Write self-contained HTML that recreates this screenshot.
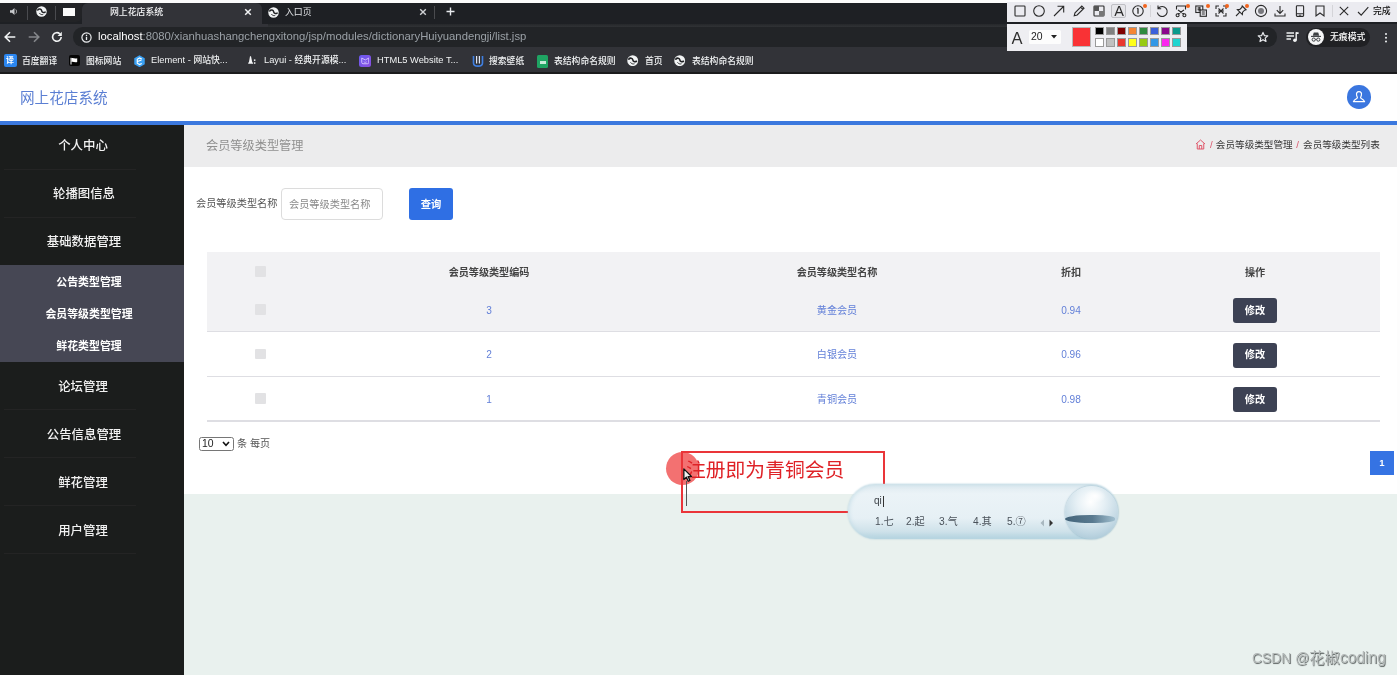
<!DOCTYPE html>
<html lang="zh-CN">
<head>
<meta charset="utf-8">
<title>网上花店系统</title>
<style>
*{box-sizing:border-box;margin:0;padding:0}
html,body{width:1400px;height:675px;overflow:hidden;background:#fff}
body{position:relative;font-family:"Liberation Sans","Noto Sans CJK SC",sans-serif;font-size:12px;color:#333}
.abs{position:absolute}
.t,.tc{will-change:transform}
.t{position:absolute;white-space:nowrap;line-height:1;transform:translateY(-50%)}
.tc{position:absolute;white-space:nowrap;line-height:1;transform:translate(-50%,-50%)}
/* chrome */
#chrome{left:0;top:0;width:1397px;height:73.6px;background:#323338}
#tabbar{left:0;top:3px;width:1397px;height:21px;background:#1e2024}
#topwhite{left:0;top:0;width:1006.5px;height:3px;background:#fbfbfb}
#rightwhite{left:1397px;top:0;width:3px;height:675px;background:#fdfdfd}
#pinned{left:0;top:3px;width:82px;height:19px;background:#222326;border-radius:0 0 6px 0}
#acttab{left:82px;top:3px;width:180px;height:22px;background:#323338;border-radius:6px 6px 0 0}
#urlpill{left:73px;top:27px;width:1203.5px;height:19.6px;border-radius:9.8px;background:#222427}
.bm{color:#f1f3f4;font-size:8.8px;font-weight:500}.bm b{font-weight:normal;font-size:9.3px}
/* app */
#hdr{left:0;top:73.6px;width:1397px;height:47.4px;background:#fff}
#blue{left:0;top:120.8px;width:1397px;height:4.6px;background:#3b78de}
#side{left:0;top:125px;width:184px;height:550px;background:#1b1d1c}
#sub{left:0;top:265px;width:184px;height:97px;background:#464754}
.mi{color:#f2f2f2;font-size:12.4px;font-weight:500}
.si{color:#fff;font-size:10.9px;font-weight:bold}
#main{left:184px;top:125px;width:1213px;height:550px;background:#e9f1ee}
#tbar{left:184px;top:125px;width:1213px;height:42.4px;background:#ececed}
#panel{left:184px;top:167px;width:1213px;height:327.2px;background:#fff}

.sep{left:4px;width:132px;height:1px;background:#242424}
.ln{left:207px;width:1173px;height:1.5px;background:#dedee3}
.cb{width:10.5px;height:10.5px;background:#e2e2e4;border-radius:1px}
.th{font-size:10.1px;font-weight:bold;color:#444}
.td{font-size:10.1px;color:#6380d8}
.btn{left:1233px;width:44px;height:25px;background:#3d4254;border-radius:3px}
.bt{left:1255px;font-size:10.2px;font-weight:bold;color:#fff}

#ime{left:848px;top:484px;width:270px;height:54.5px;border-radius:27px;background:linear-gradient(180deg,#dde9ef 0%,#ebf3f7 18%,#e6f0f5 62%,#cfe2ea 86%,#b2d2df 100%);box-shadow:0 0 2px #a9cad8,inset 0 0 5px #bcd8e3}
#ball{left:1064.5px;top:485.5px;width:53px;height:53px;border-radius:50%;background:radial-gradient(circle at 48% 30%,#ffffff 0%,#e6f0f5 30%,#bfd6e2 68%,#98bccd 100%);box-shadow:0 0 2px #86acbf}
.ime{top:522.3px;font-size:10.2px;color:#4a525a}
</style>
</head>
<body>
<!-- browser chrome -->
<div class="abs" id="chrome"></div>
<div class="abs" id="tabbar"></div>
<div class="abs" id="pinned"></div>
<div class="abs" id="acttab"></div>
<div class="abs" id="urlpill"></div>


<!-- tab strip -->
<div class="abs" style="left:27px;top:6px;width:1px;height:14px;background:#4a4b4f"></div>
<div class="abs" style="left:55px;top:6px;width:1px;height:14px;background:#4a4b4f"></div>
<svg class="abs" style="left:9px;top:7px" width="9" height="9" viewBox="0 0 18 18"><path d="M2 6.5 H6 L11 2 V16 L6 11.5 H2 Z" fill="#c8cacd"/><path d="M13.5 5 C15.5 7 15.5 11 13.5 13" fill="none" stroke="#c8cacd" stroke-width="1.8"/></svg>
<svg class="abs" style="left:35.5px;top:6.0px" width="11.0" height="11.0" viewBox="0 0 20 20"><circle cx="10" cy="10" r="9.5" fill="#f1f3f4"/><path d="M3.2 7.2 C5.5 4.6 9.6 5.2 10.2 8.6 C10.7 11.6 13.6 12.8 16.6 11" fill="none" stroke="#202124" stroke-width="2.8" stroke-linecap="round"/><path d="M6.5 13.5 C8 15.5 10.5 16.3 12.5 15.6" fill="none" stroke="#202124" stroke-width="1.6" stroke-linecap="round"/></svg>
<div class="abs" style="left:63px;top:7.5px;width:12px;height:8.5px;background:#fafafa"></div>
<div class="t" style="left:109.5px;top:12px;font-size:8.9px;color:#f4f5f6;font-weight:500">网上花店系统</div>
<svg class="abs" style="left:243.5px;top:8px" width="8" height="8" viewBox="0 0 8 8"><path d="M1.2 1.2 L6.8 6.8 M6.8 1.2 L1.2 6.8" stroke="#f1f3f4" stroke-width="1.5"/></svg>
<svg class="abs" style="left:267.5px;top:6.5px" width="11.0" height="11.0" viewBox="0 0 20 20"><circle cx="10" cy="10" r="9.5" fill="#f1f3f4"/><path d="M3.2 7.2 C5.5 4.6 9.6 5.2 10.2 8.6 C10.7 11.6 13.6 12.8 16.6 11" fill="none" stroke="#202124" stroke-width="2.8" stroke-linecap="round"/><path d="M6.5 13.5 C8 15.5 10.5 16.3 12.5 15.6" fill="none" stroke="#202124" stroke-width="1.6" stroke-linecap="round"/></svg>
<div class="t" style="left:284.5px;top:12px;font-size:8.9px;color:#e2e4e7">入口页</div>
<svg class="abs" style="left:418.5px;top:8px" width="8" height="8" viewBox="0 0 8 8"><path d="M1.2 1.2 L6.8 6.8 M6.8 1.2 L1.2 6.8" stroke="#d0d2d5" stroke-width="1.4"/></svg>
<div class="abs" style="left:434px;top:6px;width:1px;height:13px;background:#4a4b4f"></div>
<svg class="abs" style="left:445.5px;top:7px" width="9" height="9" viewBox="0 0 9 9"><path d="M4.5 0.5 V8.5 M0.5 4.5 H8.5" stroke="#e8eaed" stroke-width="1.4"/></svg>

<!-- nav -->
<svg class="abs" style="left:3.5px;top:31px" width="12" height="12" viewBox="0 0 12 12"><path d="M11.3 6 H1.5 M6 1.2 L1.2 6 L6 10.8" fill="none" stroke="#f1f3f4" stroke-width="1.6"/></svg>
<svg class="abs" style="left:27.5px;top:31px" width="12" height="12" viewBox="0 0 12 12"><path d="M0.7 6 H10.5 M6 1.2 L10.8 6 L6 10.8" fill="none" stroke="#85878b" stroke-width="1.6"/></svg>
<svg class="abs" style="left:50.5px;top:31px" width="12" height="12" viewBox="0 0 12 12"><path d="M10.2 6 A4.3 4.3 0 1 1 8.8 2.8" fill="none" stroke="#f1f3f4" stroke-width="1.6"/><path d="M10.8 0.8 V5 H6.6 Z" fill="#f1f3f4"/></svg>
<svg class="abs" style="left:80.5px;top:31.5px" width="11" height="11" viewBox="0 0 11 11"><circle cx="5.5" cy="5.5" r="4.6" fill="none" stroke="#eceef0" stroke-width="1.2"/><path d="M5.5 4.8 V8 M5.5 2.8 V4" stroke="#eceef0" stroke-width="1.3"/></svg>
<div class="t" id="url" style="left:97.5px;top:37.2px;font-size:11.3px;color:#9aa0a6"><span style="color:#fff">localhost</span>:8080/xianhuashangchengxitong/jsp/modules/dictionaryHuiyuandengji/list.jsp</div>
<svg class="abs" style="left:1257px;top:31px" width="12" height="12" viewBox="0 0 24 24"><path d="M12 2.8 L14.7 9.2 L21.6 9.8 L16.4 14.3 L18 21 L12 17.4 L6 21 L7.6 14.3 L2.4 9.8 L9.3 9.2 Z" fill="none" stroke="#e8eaed" stroke-width="2.4" stroke-linejoin="round"/></svg>
<svg class="abs" style="left:1285.5px;top:31px" width="13" height="12" viewBox="0 0 13 12"><path d="M0.5 2 H8 M0.5 5 H8 M0.5 8 H5" stroke="#f1f3f4" stroke-width="1.5"/><path d="M10.2 1.2 V9" stroke="#f1f3f4" stroke-width="1.4"/><path d="M10 1.2 H12.6 V3 H10 Z" fill="#f1f3f4"/><circle cx="8.9" cy="9.2" r="1.8" fill="#f1f3f4"/></svg>
<div class="abs" style="left:1306px;top:27.5px;width:64px;height:19px;border-radius:9.5px;background:#202124"></div>
<svg class="abs" style="left:1307.7px;top:29.2px" width="16" height="16" viewBox="0 0 16 16"><circle cx="8" cy="8" r="8" fill="#f5f6f7"/><path d="M4.8 6.8 L5.8 3.6 H10.2 L11.2 6.8 Z" fill="#3c4043"/><path d="M3 7.4 H13" stroke="#3c4043" stroke-width="1.1"/><circle cx="5.7" cy="10.6" r="1.6" fill="none" stroke="#3c4043" stroke-width="1"/><circle cx="10.3" cy="10.6" r="1.6" fill="none" stroke="#3c4043" stroke-width="1"/><path d="M7.3 10.4 H8.7" stroke="#3c4043" stroke-width="0.9"/></svg>
<div class="t" style="left:1329.5px;top:37px;font-size:8.9px;color:#fff;font-weight:500">无痕模式</div>
<div class="abs" style="left:1385px;top:32.6px;width:2.2px;height:2.2px;border-radius:50%;background:#f1f3f4;box-shadow:0 3.8px 0 #f1f3f4,0 7.6px 0 #f1f3f4"></div>


<!-- bookmarks -->
<div class="abs" style="left:3.5px;top:54px;width:13.5px;height:13px;border-radius:2px;background:#2b86f0"></div>
<div class="tc" style="left:10.3px;top:60.5px;font-size:8px;color:#fff;font-weight:bold">译</div>
<div class="t bm" style="left:21.5px;top:61px">百度翻译</div>
<div class="abs" style="left:68.5px;top:55px;width:11px;height:11px;border-radius:2px;background:#050505"></div>
<svg class="abs" style="left:70px;top:56.5px" width="8" height="8" viewBox="0 0 8 8"><path d="M1 0.8 V7.5" stroke="#fff" stroke-width="1"/><path d="M1.4 1.2 C3 0.4 4.5 2 7.2 1.2 V5 C4.5 5.8 3 4.2 1.4 5 Z" fill="#fff"/></svg>
<div class="t bm" style="left:85.7px;top:61px">图标网站</div>
<svg class="abs" style="left:133.5px;top:54.5px" width="11" height="12.5" viewBox="0 0 22 25"><path d="M11 0.5 L21.5 6.5 V18.5 L11 24.5 L0.5 18.5 V6.5 Z" fill="#3aa0f3"/><path d="M15.5 8.2 L11 5.8 L6.5 8.4 V16.6 L11 19.2 L15.5 16.8 M7 12.8 L15 9.8" fill="none" stroke="#fff" stroke-width="2.2"/></svg>
<div class="t bm" style="left:150.5px;top:61px"><b>Element - </b>网站快<b>...</b></div>
<svg class="abs" style="left:247.8px;top:56.3px" width="8" height="8" viewBox="0 0 8 8"><path d="M2 0.2 L3 0.2 L4.3 6.6 H5 V7.8 H0.2 V6.6 H0.9 Z" fill="#f4f5f6"/><rect x="5.9" y="3.4" width="1.5" height="1.5" fill="#f4f5f6"/><rect x="5.9" y="6.3" width="1.5" height="1.5" fill="#f4f5f6"/></svg>
<div class="t bm" style="left:263.5px;top:61px"><b>Layui - </b>经典开源模<b>...</b></div>
<div class="abs" style="left:358.5px;top:54.5px;width:12.5px;height:12.5px;border-radius:2.5px;background:linear-gradient(135deg,#6a5bf0,#8a4fe0)"></div>
<svg class="abs" style="left:360.5px;top:57px" width="8.5" height="7.5" viewBox="0 0 17 15"><path d="M1.5 2 L8.5 6 L15.5 2 V11 C15.5 12.5 14.5 13.5 13 13.5 H4 C2.5 13.5 1.5 12.5 1.5 11 Z" fill="none" stroke="#d9ccff" stroke-width="1.8"/><path d="M5.5 9.5 C7 11 10 11 11.5 9.5" fill="none" stroke="#d9ccff" stroke-width="1.5"/></svg>
<div class="t bm" style="left:376.5px;top:61px"><b>HTML5 Website T...</b></div>
<svg class="abs" style="left:471.5px;top:54.5px" width="12" height="12.5" viewBox="0 0 12 12.5"><path d="M1.5 1 V8 C1.5 12.2 10.5 12.2 10.5 8 V1" fill="none" stroke="#3f7fe0" stroke-width="1.6"/><path d="M4.6 1 V8.5 M7.4 1 V8.5" stroke="#dfe6f5" stroke-width="1.2"/></svg>
<div class="t bm" style="left:488.7px;top:61px">搜索壁纸</div>
<div class="abs" style="left:537px;top:54.5px;width:11px;height:13px;border-radius:1.5px;background:#1fa463"></div>
<div class="abs" style="left:539.5px;top:60.5px;width:6px;height:3.6px;background:#d9f2e4;opacity:.9"></div>
<div class="t bm" style="left:554px;top:61px">表结构命名规则</div>
<svg class="abs" style="left:627.3px;top:55.0px" width="11.4" height="11.4" viewBox="0 0 20 20"><circle cx="10" cy="10" r="9.5" fill="#f1f3f4"/><path d="M3.2 7.2 C5.5 4.6 9.6 5.2 10.2 8.6 C10.7 11.6 13.6 12.8 16.6 11" fill="none" stroke="#202124" stroke-width="2.8" stroke-linecap="round"/><path d="M6.5 13.5 C8 15.5 10.5 16.3 12.5 15.6" fill="none" stroke="#202124" stroke-width="1.6" stroke-linecap="round"/></svg>
<div class="t bm" style="left:644.7px;top:61px">首页</div>
<svg class="abs" style="left:674.3px;top:55.0px" width="11.4" height="11.4" viewBox="0 0 20 20"><circle cx="10" cy="10" r="9.5" fill="#f1f3f4"/><path d="M3.2 7.2 C5.5 4.6 9.6 5.2 10.2 8.6 C10.7 11.6 13.6 12.8 16.6 11" fill="none" stroke="#202124" stroke-width="2.8" stroke-linecap="round"/><path d="M6.5 13.5 C8 15.5 10.5 16.3 12.5 15.6" fill="none" stroke="#202124" stroke-width="1.6" stroke-linecap="round"/></svg>
<div class="t bm" style="left:691.8px;top:61px">表结构命名规则</div>


<!-- screenshot tool -->
<div class="abs" style="left:1006.5px;top:0;width:390.3px;height:21.7px;background:#ebebf0"></div>
<div class="abs" style="left:1006.5px;top:24.3px;width:180.5px;height:26.4px;background:#eeeef2"></div>
<svg class="abs" style="left:1012.6px;top:3.8000000000000007px" width="14" height="14" viewBox="0 0 14 14" fill="none" stroke="#2a2a2a" stroke-width="1.1"><rect x="2" y="2" width="10" height="10" rx="0.8"/></svg>
<svg class="abs" style="left:1032.4px;top:3.8000000000000007px" width="14" height="14" viewBox="0 0 14 14" fill="none" stroke="#2a2a2a" stroke-width="1.1"><circle cx="7" cy="7" r="5.3"/></svg>
<svg class="abs" style="left:1052.2px;top:3.8000000000000007px" width="14" height="14" viewBox="0 0 14 14" fill="none" stroke="#2a2a2a" stroke-width="1.1"><path d="M2 12 L11.5 2.5 M5.5 2.3 H11.7 V8.5"/></svg>
<svg class="abs" style="left:1071.7px;top:3.8000000000000007px" width="14" height="14" viewBox="0 0 14 14" fill="none" stroke="#2a2a2a" stroke-width="1.1"><path d="M2.2 11.8 L3 8.8 L9.8 2 L12 4.2 L5.2 11 Z M8.6 3.2 L10.8 5.4"/></svg>
<svg class="abs" style="left:1091.6px;top:3.8000000000000007px" width="14" height="14" viewBox="0 0 14 14" fill="none" stroke="#2a2a2a" stroke-width="1.1"><rect x="2" y="2" width="10" height="10" rx="0.8"/><path d="M2 2 H7 V7 H2 Z" fill="#555" stroke="none"/><path d="M7 7 H12 V12 H7 Z" fill="#777" stroke="none"/></svg>
<div class="abs" style="left:1111.4px;top:3.6px;width:15px;height:14.2px;border:1px solid #bfbfc4;border-radius:2px;background:#e6e6ea"></div>
<div class="tc" style="left:1119px;top:11px;font-size:14.5px;color:#2a2a2a">A</div>
<svg class="abs" style="left:1131.4px;top:3.8000000000000007px" width="14" height="14" viewBox="0 0 14 14" fill="none" stroke="#2a2a2a" stroke-width="1.1"><circle cx="7" cy="7" r="5.2"/><path d="M7 4.2 V9.8 M6 4.8 L7 4.2" stroke-width="1.3"/></svg>
<div class="abs" style="left:1142.6000000000001px;top:3.8px;width:4px;height:4px;border-radius:50%;background:#f0641e"></div>
<div class="abs" style="left:1150.3px;top:4.5px;width:1px;height:12px;background:#d4d4d8"></div>
<svg class="abs" style="left:1154.8px;top:3.8000000000000007px" width="14" height="14" viewBox="0 0 14 14" fill="none" stroke="#2a2a2a" stroke-width="1.1"><path d="M3.2 4.5 A5 5 0 1 1 2.3 8.5 M3 1.6 V4.8 H6.2"/></svg>
<svg class="abs" style="left:1174.4px;top:3.8000000000000007px" width="14" height="14" viewBox="0 0 14 14" fill="none" stroke="#2a2a2a" stroke-width="1.1"><path d="M2.5 2 H11.5 V5.5 M2.5 2 V5.5 M4 6 L10.2 10.2 M10 6 L3.8 10.2"/><circle cx="3.6" cy="11.2" r="1.5"/><circle cx="10.4" cy="11.2" r="1.5"/></svg>
<div class="abs" style="left:1185.6000000000001px;top:3.8px;width:4px;height:4px;border-radius:50%;background:#f0641e"></div>
<svg class="abs" style="left:1194.4px;top:3.8000000000000007px" width="14" height="14" viewBox="0 0 14 14" fill="none" stroke="#2a2a2a" stroke-width="1.1"><rect x="1.8" y="2" width="7" height="6.5"/><path d="M3.5 4 H7 M5.2 3 V7.5 M3.5 5.8 H7"/><rect x="6.2" y="6" width="6.2" height="6.3" fill="#ebebf0"/><path d="M7.8 8 H10.8 M7.8 10 H10.8"/></svg>
<div class="abs" style="left:1205.6000000000001px;top:3.8px;width:4px;height:4px;border-radius:50%;background:#f0641e"></div>
<svg class="abs" style="left:1213.8px;top:3.8000000000000007px" width="14" height="14" viewBox="0 0 14 14" fill="none" stroke="#2a2a2a" stroke-width="1.1"><path d="M2 5 V2 H5 M9 2 H12 V5 M12 9 V12 H9 M5 12 H2 V9 M4.5 4.5 L9.5 9.5 M9.5 4.5 L4.5 9.5 M4 7 H10"/></svg>
<div class="abs" style="left:1225.0px;top:3.8px;width:4px;height:4px;border-radius:50%;background:#f0641e"></div>
<svg class="abs" style="left:1233.8px;top:3.8000000000000007px" width="14" height="14" viewBox="0 0 14 14" fill="none" stroke="#2a2a2a" stroke-width="1.1"><path d="M8.2 2 L12 5.8 L10.6 6.2 L8.6 8.2 L8.4 10.6 L3.4 5.6 L5.8 5.4 L7.8 3.4 Z M5.8 8.2 L2 12"/></svg>
<div class="abs" style="left:1245.0px;top:3.8px;width:4px;height:4px;border-radius:50%;background:#f0641e"></div>
<svg class="abs" style="left:1253.6px;top:3.8000000000000007px" width="14" height="14" viewBox="0 0 14 14" fill="none" stroke="#2a2a2a" stroke-width="1.1"><circle cx="7" cy="7" r="5.6"/><circle cx="7" cy="7" r="3" fill="#77777c" stroke="none"/></svg>
<svg class="abs" style="left:1273.0px;top:3.8000000000000007px" width="14" height="14" viewBox="0 0 14 14" fill="none" stroke="#2a2a2a" stroke-width="1.1"><path d="M7 2 V9.2 M3.8 6.2 L7 9.4 L10.2 6.2 M2 9.5 V12 H12 V9.5"/></svg>
<svg class="abs" style="left:1293.0px;top:3.8000000000000007px" width="14" height="14" viewBox="0 0 14 14" fill="none" stroke="#2a2a2a" stroke-width="1.1"><rect x="3.4" y="1.8" width="7.2" height="10.6" rx="0.8"/><path d="M3.4 9.8 H10.6 M6.2 11.2 H7.8"/></svg>
<svg class="abs" style="left:1313.0px;top:3.8000000000000007px" width="14" height="14" viewBox="0 0 14 14" fill="none" stroke="#2a2a2a" stroke-width="1.1"><path d="M3 2 H11 V12 L7 9 L3 12 Z"/></svg>
<div class="abs" style="left:1332px;top:4.5px;width:1px;height:12px;background:#d4d4d8"></div>
<svg class="abs" style="left:1336.7px;top:3.8000000000000007px" width="14" height="14" viewBox="0 0 14 14" fill="none" stroke="#2a2a2a" stroke-width="1.1"><path d="M2.8 2.8 L11.2 11.2 M11.2 2.8 L2.8 11.2"/></svg>
<svg class="abs" style="left:1356.4px;top:3.8000000000000007px" width="14" height="14" viewBox="0 0 14 14" fill="none" stroke="#2a2a2a" stroke-width="1.1"><path d="M2 8 L5.2 11.2 L12.3 3.2"/></svg>
<div class="t" style="left:1373.4px;top:10.8px;font-size:8.8px;color:#111;font-weight:500">完成</div>
<div class="tc" style="left:1017.2px;top:37.6px;font-size:16.5px;color:#2f2f2f">A</div>
<div class="abs" style="left:1029.3px;top:30px;width:32px;height:13.6px;background:#fdfdfd;border-radius:1.5px"></div>
<div class="t" style="left:1031.4px;top:37px;font-size:10.4px;color:#222">20</div>
<svg class="abs" style="left:1051.3px;top:35px" width="6" height="4" viewBox="0 0 6 4"><path d="M0 0 H6 L3 3.6 Z" fill="#222"/></svg>
<div class="abs" style="left:1072px;top:27.4px;width:18.8px;height:19.2px;background:#f93235;border:1px solid #b8b8b8"></div>
<div class="abs" style="left:1095.0px;top:27.2px;width:8.8px;height:8.3px;background:#000000;border:.5px solid #9a9a9a"></div><div class="abs" style="left:1095.0px;top:38.4px;width:8.8px;height:8.4px;background:#ffffff;border:.5px solid #9a9a9a"></div>
<div class="abs" style="left:1106.0px;top:27.2px;width:8.8px;height:8.3px;background:#808080;border:.5px solid #9a9a9a"></div><div class="abs" style="left:1106.0px;top:38.4px;width:8.8px;height:8.4px;background:#c0c0c0;border:.5px solid #9a9a9a"></div>
<div class="abs" style="left:1117.1px;top:27.2px;width:8.8px;height:8.3px;background:#800000;border:.5px solid #9a9a9a"></div><div class="abs" style="left:1117.1px;top:38.4px;width:8.8px;height:8.4px;background:#e9382f;border:.5px solid #9a9a9a"></div>
<div class="abs" style="left:1128.1px;top:27.2px;width:8.8px;height:8.3px;background:#f58535;border:.5px solid #9a9a9a"></div><div class="abs" style="left:1128.1px;top:38.4px;width:8.8px;height:8.4px;background:#ffff1a;border:.5px solid #9a9a9a"></div>
<div class="abs" style="left:1139.1px;top:27.2px;width:8.8px;height:8.3px;background:#2f8a3f;border:.5px solid #9a9a9a"></div><div class="abs" style="left:1139.1px;top:38.4px;width:8.8px;height:8.4px;background:#97ca12;border:.5px solid #9a9a9a"></div>
<div class="abs" style="left:1150.2px;top:27.2px;width:8.8px;height:8.3px;background:#3b5fda;border:.5px solid #9a9a9a"></div><div class="abs" style="left:1150.2px;top:38.4px;width:8.8px;height:8.4px;background:#3297e6;border:.5px solid #9a9a9a"></div>
<div class="abs" style="left:1161.2px;top:27.2px;width:8.8px;height:8.3px;background:#8a068c;border:.5px solid #9a9a9a"></div><div class="abs" style="left:1161.2px;top:38.4px;width:8.8px;height:8.4px;background:#fa26ee;border:.5px solid #9a9a9a"></div>
<div class="abs" style="left:1172.2px;top:27.2px;width:8.8px;height:8.3px;background:#0b9a8d;border:.5px solid #9a9a9a"></div><div class="abs" style="left:1172.2px;top:38.4px;width:8.8px;height:8.4px;background:#1fd5d0;border:.5px solid #9a9a9a"></div>

<div class="abs" style="left:0;top:71.8px;width:1397px;height:1.8px;background:#1b1b1d"></div>
<div class="abs" style="left:268px;top:24px;width:738px;height:3px;background:linear-gradient(180deg,#26282b,#303235)"></div>
<!-- app -->
<div class="abs" id="hdr"></div>
<div class="t" style="left:19.6px;top:97.8px;font-size:14.6px;color:#5b7fd3">网上花店系统</div>
<div class="abs" id="blue"></div>
<div class="abs" id="main"></div>
<div class="abs" id="tbar"></div>
<div class="abs" id="panel"></div>
<div class="abs" id="side"></div>
<div class="abs" id="sub"></div>


<!-- sidebar items -->
<div class="tc mi" style="left:83px;top:146.1px">个人中心</div>
<div class="tc mi" style="left:83.5px;top:194.1px">轮播图信息</div>
<div class="tc mi" style="left:83.5px;top:242.1px">基础数据管理</div>
<div class="tc si" style="left:89px;top:282px">公告类型管理</div>
<div class="tc si" style="left:89px;top:314px">会员等级类型管理</div>
<div class="tc si" style="left:89px;top:346px">鲜花类型管理</div>
<div class="tc mi" style="left:83px;top:386.6px">论坛管理</div>
<div class="tc mi" style="left:83.5px;top:434.6px">公告信息管理</div>
<div class="tc mi" style="left:83px;top:482.6px">鲜花管理</div>
<div class="tc mi" style="left:83px;top:531.1px">用户管理</div>
<div class="abs sep" style="top:169px"></div>
<div class="abs sep" style="top:217px"></div>
<div class="abs sep" style="top:409px"></div>
<div class="abs sep" style="top:457px"></div>
<div class="abs sep" style="top:505px"></div>
<div class="abs sep" style="top:553px"></div>

<!-- title bar -->
<div class="t" style="left:206px;top:145.5px;font-size:12.2px;color:#8f8f8f">会员等级类型管理</div>
<svg class="abs" style="left:1195px;top:139px" width="11" height="11" viewBox="0 0 22 22"><path d="M2 10 L11 2 L20 10 M4.5 9 V20 H17.5 V9 M8.5 20 V13 H13.5 V20" fill="none" stroke="#e0566a" stroke-width="2"/></svg>
<div class="t" style="left:1210.3px;top:145.3px;font-size:9.6px;color:#333"><span style="color:#d9536a;margin-right:3.2px">/</span>会员等级类型管理<span style="color:#d9536a;margin:0 4.2px 0 3.6px">/</span>会员等级类型列表</div>

<!-- search -->
<div class="t" style="left:196px;top:204px;font-size:10.2px;color:#555">会员等级类型名称</div>
<div class="abs" style="left:281px;top:188px;width:102px;height:31.5px;border:1px solid #dcdcdc;border-radius:4px;background:#fff"></div>
<div class="t" style="left:289px;top:204.5px;font-size:10.2px;color:#8a8a8a">会员等级类型名称</div>
<div class="abs" style="left:408.5px;top:188px;width:44px;height:32px;background:#2f6fe4;border-radius:3px"></div>
<div class="tc" style="left:430.5px;top:204.5px;font-size:10.3px;color:#fff;font-weight:bold">查询</div>

<!-- table -->
<div class="abs" style="left:207px;top:252px;width:1173px;height:80px;background:#f2f2f4"></div>
<div class="abs ln" style="top:330.5px"></div>
<div class="abs ln" style="top:375.5px"></div>
<div class="abs ln" style="top:420px"></div>
<div class="abs cb" style="left:255px;top:266px"></div>
<div class="abs cb" style="left:255px;top:304px"></div>
<div class="abs cb" style="left:255px;top:348.5px"></div>
<div class="abs cb" style="left:255px;top:393px"></div>
<div class="tc th" style="left:489px;top:272.6px">会员等级类型编码</div>
<div class="tc th" style="left:837px;top:272.6px">会员等级类型名称</div>
<div class="tc th" style="left:1070.5px;top:272.6px">折扣</div>
<div class="tc th" style="left:1254.5px;top:272.6px">操作</div>

<div class="tc td" style="left:489px;top:310.8px">3</div>
<div class="tc td" style="left:837px;top:310.8px">黄金会员</div>
<div class="tc td" style="left:1070.5px;top:310.8px">0.94</div>
<div class="abs btn" style="top:298px"></div><div class="tc bt" style="top:310.5px">修改</div>

<div class="tc td" style="left:489px;top:355.3px">2</div>
<div class="tc td" style="left:837px;top:355.3px">白银会员</div>
<div class="tc td" style="left:1070.5px;top:355.3px">0.96</div>
<div class="abs btn" style="top:342.5px"></div><div class="tc bt" style="top:355px">修改</div>

<div class="tc td" style="left:489px;top:399.8px">1</div>
<div class="tc td" style="left:837px;top:399.8px">青铜会员</div>
<div class="tc td" style="left:1070.5px;top:399.8px">0.98</div>
<div class="abs btn" style="top:387px"></div><div class="tc bt" style="top:399.5px">修改</div>

<!-- pager -->
<div class="abs" style="left:198.5px;top:436.5px;width:35.8px;height:14px;border:1px solid #767676;border-radius:2.5px;background:#fff"></div>
<div class="t" style="left:201.5px;top:443.7px;font-size:10.4px;color:#222">10</div>
<svg class="abs" style="left:222px;top:441px" width="8" height="6" viewBox="0 0 8 6"><path d="M1 1 L4 4.3 L7 1" fill="none" stroke="#111" stroke-width="1.6"/></svg>
<div class="t" style="left:237px;top:443.6px;font-size:10.1px;color:#555">条 每页</div>
<div class="abs" style="left:1370px;top:451px;width:24px;height:24px;background:#3573e3"></div>
<div class="tc" style="left:1382px;top:463px;font-size:9.5px;color:#fff;font-weight:bold">1</div>


<!-- avatar -->
<div class="abs" style="left:1347px;top:85px;width:23.6px;height:23.6px;border-radius:50%;background:#3a76df"></div>
<svg class="abs" style="left:1351.8px;top:89.5px" width="14" height="14" viewBox="0 0 14 14"><path d="M7 1.6 C9 1.6 9.8 3.2 9.4 5.2 C9.1 6.6 8.6 7.2 8.6 7.8 C8.6 8.6 11.6 9 12.6 11.6 H1.4 C2.4 9 5.4 8.6 5.4 7.8 C5.4 7.2 4.9 6.6 4.6 5.2 C4.2 3.2 5 1.6 7 1.6 Z" fill="none" stroke="#fff" stroke-width="1.2" stroke-linejoin="round"/></svg>

<!-- annotation -->
<div class="abs" style="left:665.9px;top:452.2px;width:33px;height:33px;border-radius:50%;background:rgba(240,78,78,.8)"></div>
<div class="abs" style="left:681px;top:450.5px;width:204px;height:62.5px;border:2px solid #ea3539"></div>
<div class="t" style="left:686px;top:470.8px;font-size:19.8px;color:#df2227">注册即为青铜会员</div>
<div class="abs" style="left:685.6px;top:481px;width:1.2px;height:25.3px;background:#555"></div>
<svg class="abs" style="left:683px;top:468.4px" width="10.2" height="14.5" viewBox="0 0 12 17"><path d="M1 1 V13.5 L4 10.8 L6.2 15.6 L8.2 14.7 L6 10 H10 Z" fill="#f2f2f2" stroke="#111" stroke-width="1.5" stroke-linejoin="round"/></svg>

<!-- IME -->
<div class="abs" id="ime"></div>
<div class="abs" id="ball"></div>
<div class="abs" style="left:1065px;top:514.5px;width:50px;height:8px;border-radius:50% 40% 40% 50%;background:linear-gradient(90deg,#35566d,#4a6d85 55%,#9dbccc);opacity:.9"></div>
<div class="abs" style="left:1084px;top:489px;width:22px;height:14px;border-radius:50%;background:radial-gradient(ellipse,#ffffff,rgba(255,255,255,0) 70%)"></div>
<div class="t" style="left:874px;top:501.2px;font-size:10px;color:#3a3f45">qi</div>
<div class="abs" style="left:883.3px;top:495.5px;width:1px;height:11px;background:#333"></div>
<div class="t ime" style="left:874.5px">1.七</div>
<div class="t ime" style="left:906px">2.起</div>
<div class="t ime" style="left:939px">3.气</div>
<div class="t ime" style="left:973px">4.其</div>
<div class="t ime" style="left:1006.5px">5.⑦</div>
<svg class="abs" style="left:1040px;top:518.7px" width="14" height="8" viewBox="0 0 14 8"><path d="M4 0.5 V7.5 L0.5 4 Z" fill="#a9b8c0"/><path d="M9.5 0.5 V7.5 L13 4 Z" fill="#333"/></svg>

<!-- watermark -->
<div class="t" style="left:1252.3px;top:658.2px;font-size:14.9px;color:#b4bab9;text-shadow:0.7px 0.8px 0.8px #5e6463,-0.4px -0.4px 0.6px #f4f7f6"><span style="font-size:13.9px">CSDN @</span><span style="font-size:15.3px">花椒</span><span style="font-size:15.6px">coding</span></div>

<div class="abs" id="topwhite"></div>
<div class="abs" style="left:1006px;top:0;width:394px;height:2.4px;background:#fcfcfd"></div>
<div class="abs" id="rightwhite"></div>
</body>
</html>
